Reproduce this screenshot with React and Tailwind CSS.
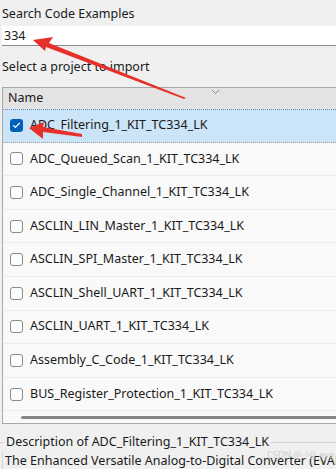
import { Check } from "lucide-react";

const projects = [
  "ADC_Filtering_1_KIT_TC334_LK",
  "ADC_Queued_Scan_1_KIT_TC334_LK",
  "ADC_Single_Channel_1_KIT_TC334_LK",
  "ASCLIN_LIN_Master_1_KIT_TC334_LK",
  "ASCLIN_SPI_Master_1_KIT_TC334_LK",
  "ASCLIN_Shell_UART_1_KIT_TC334_LK",
  "ASCLIN_UART_1_KIT_TC334_LK",
  "Assembly_C_Code_1_KIT_TC334_LK",
  "BUS_Register_Protection_1_KIT_TC334_LK",
];

function Checkbox({ checked }) {
  return checked ? (
    <span className="flex h-[13px] w-[13px] shrink-0 items-center justify-center rounded-[3px] bg-[#005fb8]">
      <Check className="h-[9px] w-[9px] text-white" strokeWidth={3} />
    </span>
  ) : (
    <span className="block h-[13px] w-[13px] shrink-0 rounded-[3px] border border-[#8a8a8a] bg-[#fdfdfd]" />
  );
}

export default function App() {
  return (
    <div className="relative h-[469px] w-[336px] overflow-hidden bg-[#f0f0f0] text-[12.5px] text-[#1a1a1a] font-['Noto_Sans',sans-serif]">
      <div className="pl-[2px] pt-[5px] leading-[18px]">Search Code Examples</div>
      <div className="ml-[2px] mt-[3px] h-[20px] border-b border-[#8c8c8c] bg-white pl-[2px] leading-[19px]">
        334
      </div>
      <div className="mt-[12px] pl-[2px] leading-[18px]">Select a project to import</div>

      {/* project list */}
      <div className="ml-[2px] mt-[11px] border-y border-l border-[#a8a8a8]">
        <div className="relative flex h-[21px] items-center bg-[#e3e3e3] pl-[5px]">
          Name
          <svg className="absolute left-[208px] top-[1px]" width="9" height="6" viewBox="0 0 9 6">
            <path d="M1 1 L4.5 4.5 L8 1" fill="none" stroke="#8a8a8a" strokeWidth="1" />
          </svg>
        </div>
        <div className="bg-[#f9f9f9]">
          {projects.map((p, i) =>
            i === 0 ? (
              <div
                key={p}
                className="flex h-[33.6px] items-center gap-[7px] border-y border-dotted border-t-[#5b8fc6] border-b-[#9a9a9a] bg-[#cce4f7] pl-[7px]"
              >
                <Checkbox checked />
                <span>{p}</span>
              </div>
            ) : (
              <div
                key={p}
                className="flex h-[33.6px] items-center gap-[7px] border-b border-[#ececec] pl-[7px]"
              >
                <Checkbox />
                <span>{p}</span>
              </div>
            )
          )}
          <div className="flex h-[12px] items-center pl-[18px]">
            <div className="h-[3px] flex-1 rounded-l-full bg-[#858585]" />
          </div>
        </div>
      </div>

      {/* description group */}
      <div className="relative mt-[9px]">
        <div className="flex items-center">
          <div className="h-px w-[4px] bg-[#d5d5d5]" />
          <span className="px-[2px] leading-[18px]">Description of ADC_Filtering_1_KIT_TC334_LK</span>
          <div className="h-px flex-1 bg-[#d5d5d5]" />
        </div>
        <div className="ml-[2px] border-l border-[#d5d5d5] pl-[2px] leading-[20px] whitespace-nowrap">
          The Enhanced Versatile Analog-to-Digital Converter (EVADC)
        </div>
        <span className="absolute right-[2px] top-[15px] text-[9px] text-[#cfcfcf]">CSDN @小JJ_eye</span>
      </div>

      {/* annotation arrows */}
      <svg className="pointer-events-none absolute left-0 top-0" width="336" height="469">
        <polygon points="33,40 53,37 49,43 186,98 184,99 46,47 45,51" fill="#e8302a" />
        <polygon points="29,128 44,122 43,127 82,134 82,137 43,132 43,139" fill="#e8302a" />
      </svg>
    </div>
  );
}
